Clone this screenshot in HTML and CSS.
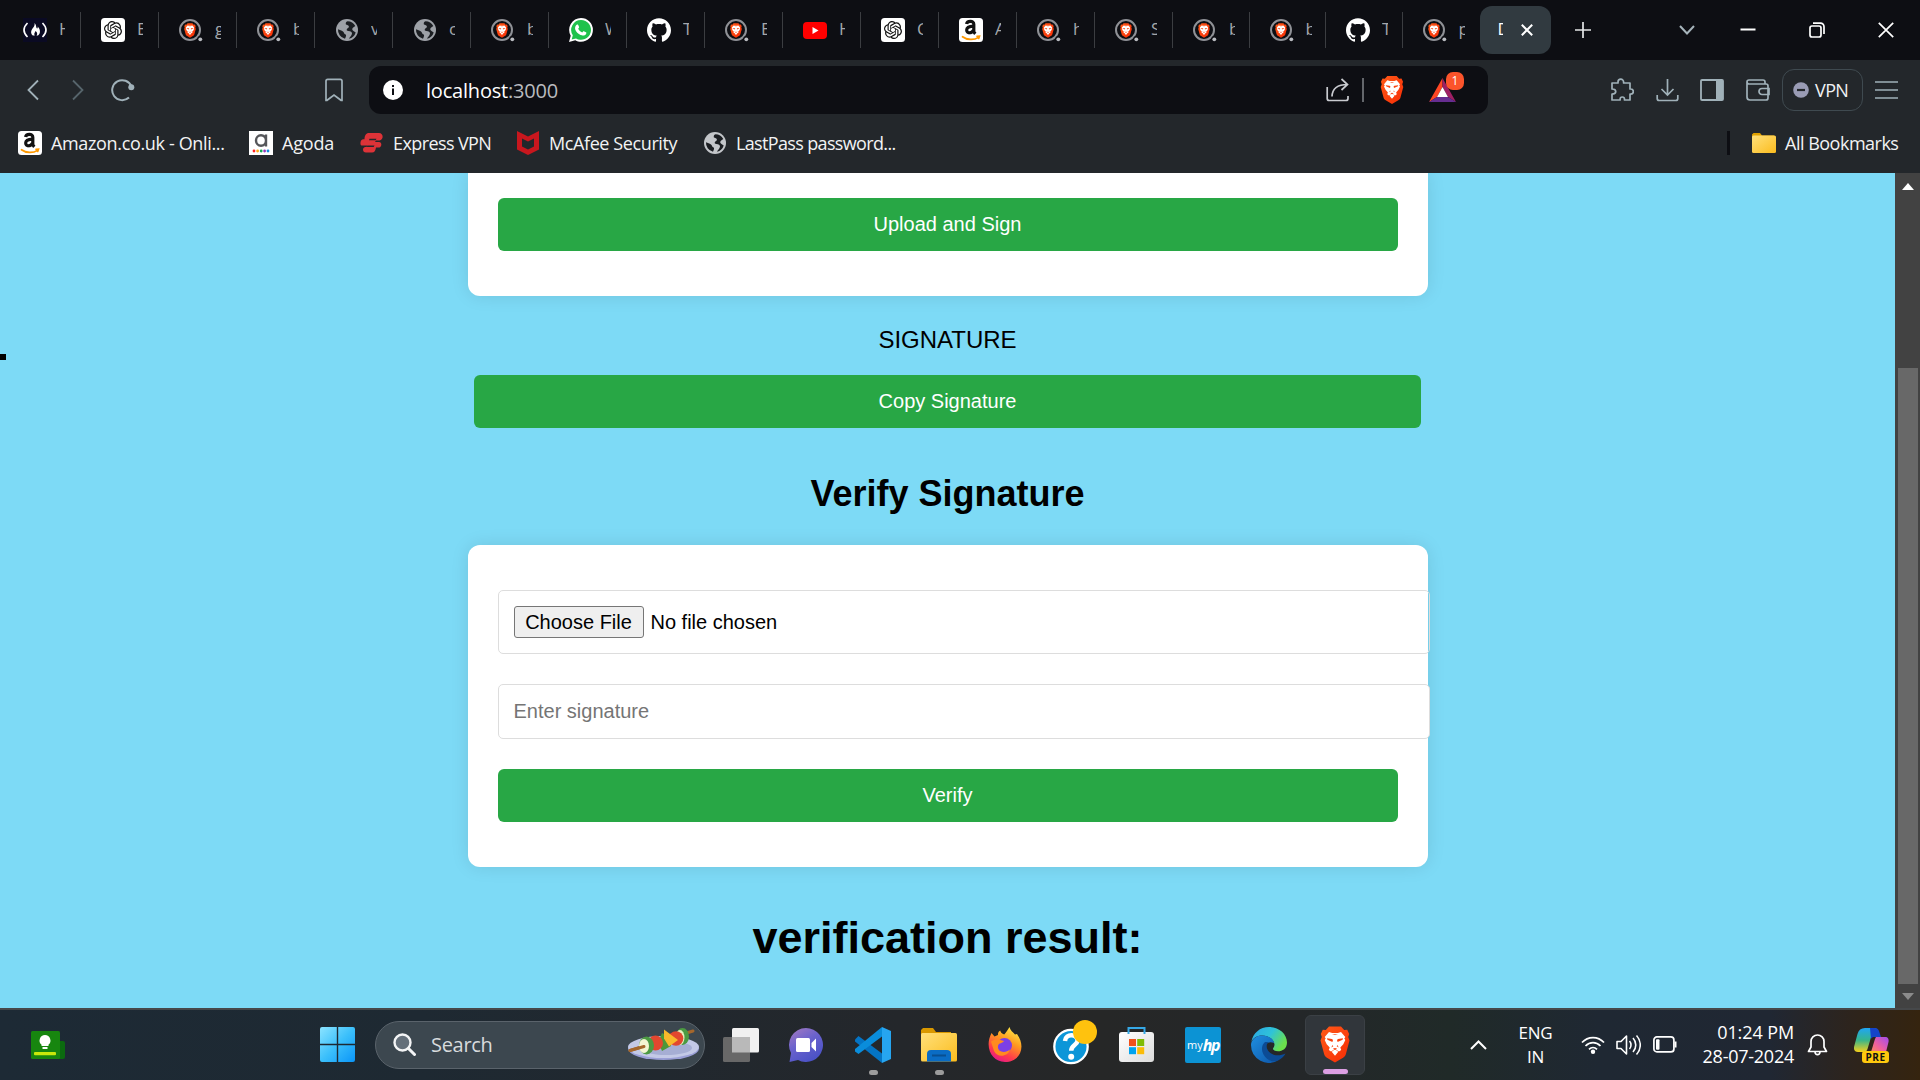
FILE: index.html
```html
<!DOCTYPE html>
<html lang="en">
<head>
<meta charset="utf-8">
<title>Digital Signature</title>
<link rel="stylesheet" href="styles.css">
</head>
<body>
<svg class="defs" width="0" height="0" aria-hidden="true">
  <defs>
    <linearGradient id="gWin" x1="0" y1="0" x2="1" y2="1"><stop offset="0" stop-color="#8ce4ff"/><stop offset=".5" stop-color="#3cc0fb"/><stop offset="1" stop-color="#0a95f8"/></linearGradient>
    <linearGradient id="gLion" x1="0" y1="0" x2="1" y2="1"><stop offset="0" stop-color="#ff5a18"/><stop offset="1" stop-color="#f72c05"/></linearGradient>
    <linearGradient id="gFolder" x1="0" y1="0" x2="1" y2="1"><stop offset="0" stop-color="#ffe07a"/><stop offset="1" stop-color="#fbbc1e"/></linearGradient>
    <linearGradient id="gChat" x1="0" y1="0" x2=".6" y2="1"><stop offset="0" stop-color="#a77bc0"/><stop offset=".5" stop-color="#6a62cd"/><stop offset="1" stop-color="#4b52c6"/></linearGradient>
    <linearGradient id="gFox" x1=".8" y1="0" x2=".3" y2="1"><stop offset="0" stop-color="#fff04a"/><stop offset=".4" stop-color="#ff9a1f"/><stop offset=".75" stop-color="#ff3d4a"/><stop offset="1" stop-color="#e5178a"/></linearGradient>
    <linearGradient id="gEdge1" x1="0" y1="0" x2="1" y2=".5"><stop offset="0" stop-color="#2aa6e8"/><stop offset=".55" stop-color="#2fc3d8"/><stop offset="1" stop-color="#6be04c"/></linearGradient>
    <linearGradient id="gEdge2" x1="0" y1="0" x2="1" y2="1"><stop offset="0" stop-color="#1f8fe0"/><stop offset="1" stop-color="#0d55a8"/></linearGradient>
    <linearGradient id="gCopA" x1="0" y1="0" x2="0" y2="1"><stop offset="0" stop-color="#1fa5f5"/><stop offset=".5" stop-color="#35b58c"/><stop offset="1" stop-color="#f7d01a"/></linearGradient>
    <linearGradient id="gCopB" x1="1" y1="0" x2="0" y2="1"><stop offset="0" stop-color="#a04cf0"/><stop offset=".6" stop-color="#f0609c"/><stop offset="1" stop-color="#fb8a5a"/></linearGradient>
    <linearGradient id="gBox" x1="0" y1="0" x2="1" y2="1"><stop offset="0" stop-color="#ffffff"/><stop offset="1" stop-color="#dcdcdc"/></linearGradient>

    <symbol id="lion" viewBox="0 0 30 36">
      <path fill="url(#gLion)" d="M9 0h12l3.200 3.600 3-.4 2 4.300-1 3 1.300 3.600-3.600 13.400c-.5 1.800-1.500 2.800-2.800 3.800L15 36l-8.100-4.700c-1.300-1-2.300-2-2.800-3.800L.5 14.100l1.300-3.600-1-3 2-4.300 3 .4z"/>
      <path fill="#fff" d="M9 5.500l3.200.9h5.600l3.200-.9 4.300 5-1 1.600 1 1.400-2 4.200-3 3.400.9 2.400-2.200 1.500-3.300-2-.4-.1 3 2.400-3.300 4-3.300-4 3-2.400-.4.100-3.300 2-2.200-1.500.9-2.400-3-3.400-2-4.200 1-1.400-1-1.600z"/>
      <path fill="#f9420f" d="M7 11.800l5 .6 1 1-.6 2-5-2.200zM23 11.800l-5 .6-1 1 .6 2 5-2.200zM12.500 18.500l.8 1.200-2 1.300zM17.500 18.500l-.8 1.200 2 1.300zM12.800 22.200l2.200-.8 2.200.8-2.200 1.300zM12 7.800h6l-3 .8z"/>
    </symbol>
    <symbol id="bravetab" viewBox="0 0 24 24">
      <circle cx="11" cy="12" r="10" fill="#0d0e13" stroke="#8f9196" stroke-width="2"/>
      <circle cx="21.500" cy="21.300" r="3.400" fill="#0d0e13"/><circle cx="21.300" cy="21.300" r="1.900" fill="#b9bbc0"/>
      <svg x="5" y="5" width="12" height="15"><use href="#lion"/></svg>
    </symbol>
    <symbol id="globe" viewBox="0 0 24 24">
      <circle cx="12" cy="12" r="11"/>
      <path class="land" d="M12.500 3.200c-1.600.6-2 2-1.600 3.200 1 .6 3 .5 3 2.200 0 1.600-1.600 1.500-2.100 2.600-.4 1 .3 1.500 1.500 1.700 2.500.3 3.700 1 3.700 2.700-.3 2.400-2 3-3 5.200a9 9 0 0 0 6.700-6.200l-2.200-1.500c-1.300-1-1.800-2.200-.6-3.400l2.400-1.700A9 9 0 0 0 12.500 3.200zM3 11.200c1.700 1 3.500 1.200 5 2.200 1.200.9 1 2.500 2.600 3.200.9.500.4 2-.6 4.200A9 9 0 0 1 3 11.200z"/>
    </symbol>
    <symbol id="openai" viewBox="0 0 24 24">
      <rect width="24" height="24" rx="3.500" fill="#fff"/>
      <svg x="3" y="3" width="18" height="18" viewBox="0 0 24 24"><path fill="#111" d="M22.2819 9.8211a5.9847 5.9847 0 0 0-.5157-4.9108 6.0462 6.0462 0 0 0-6.5098-2.9A6.0651 6.0651 0 0 0 4.9807 4.1818a5.9847 5.9847 0 0 0-3.9977 2.9 6.0462 6.0462 0 0 0 .7427 7.0966 5.98 5.98 0 0 0 .511 4.9107 6.051 6.051 0 0 0 6.5146 2.9001A5.9847 5.9847 0 0 0 13.2599 24a6.0557 6.0557 0 0 0 5.7718-4.2058 5.9894 5.9894 0 0 0 3.9977-2.9001 6.0557 6.0557 0 0 0-.7475-7.0729zm-9.022 12.6081a4.4755 4.4755 0 0 1-2.8764-1.0408l.1419-.0804 4.7783-2.7582a.7948.7948 0 0 0 .3927-.6813v-6.7369l2.02 1.1686a.071.071 0 0 1 .038.052v5.5826a4.504 4.504 0 0 1-4.4945 4.4944zm-9.6607-4.1254a4.4708 4.4708 0 0 1-.5346-3.0137l.142.0852 4.783 2.7582a.7712.7712 0 0 0 .7806 0l5.8428-3.3685v2.3324a.0804.0804 0 0 1-.0332.0615L9.74 19.9502a4.4992 4.4992 0 0 1-6.1408-1.6464zM2.3408 7.8956a4.485 4.485 0 0 1 2.3655-1.9728V11.6a.7664.7664 0 0 0 .3879.6765l5.8144 3.3543-2.0201 1.1685a.0757.0757 0 0 1-.071 0l-4.8303-2.7865A4.504 4.504 0 0 1 2.3408 7.872zm16.5963 3.8558L13.1038 8.364 15.1192 7.2a.0757.0757 0 0 1 .071 0l4.8303 2.7913a4.4944 4.4944 0 0 1-.6765 8.1042v-5.6772a.79.79 0 0 0-.407-.667zm2.0107-3.0231l-.142-.0852-4.7735-2.7818a.7759.7759 0 0 0-.7854 0L9.409 9.2297V6.8974a.0662.0662 0 0 1 .0284-.0615l4.8303-2.7866a4.4992 4.4992 0 0 1 6.6802 4.66zM8.3065 12.863l-2.02-1.1638a.0804.0804 0 0 1-.038-.0567V6.0742a4.4992 4.4992 0 0 1 7.3757-3.4537l-.142.0805L8.704 5.459a.7948.7948 0 0 0-.3927.6813zm1.0976-2.3654l2.602-1.4998 2.6069 1.4998v2.9994l-2.5974 1.4997-2.6067-1.4997Z"/></svg>
    </symbol>
    <symbol id="github" viewBox="0 0 24 24"><path fill="#fff" d="M12 .297c-6.63 0-12 5.373-12 12 0 5.303 3.438 9.8 8.205 11.385.6.113.82-.258.82-.577 0-.285-.01-1.04-.015-2.04-3.338.724-4.042-1.61-4.042-1.61C4.422 18.07 3.633 17.7 3.633 17.7c-1.087-.744.084-.729.084-.729 1.205.084 1.838 1.236 1.838 1.236 1.07 1.835 2.809 1.305 3.495.998.108-.776.417-1.305.76-1.605-2.665-.3-5.466-1.332-5.466-5.93 0-1.31.465-2.38 1.235-3.22-.135-.303-.54-1.523.105-3.176 0 0 1.005-.322 3.3 1.23.96-.267 1.98-.399 3-.405 1.02.006 2.04.138 3 .405 2.28-1.552 3.285-1.23 3.285-1.23.645 1.653.24 2.873.12 3.176.765.84 1.23 1.91 1.23 3.22 0 4.61-2.805 5.625-5.475 5.92.42.36.81 1.096.81 2.22 0 1.606-.015 2.896-.015 3.286 0 .315.21.69.825.57C20.565 22.092 24 17.592 24 12.297c0-6.627-5.373-12-12-12"/></symbol>
    <symbol id="amazon" viewBox="0 0 24 24">
      <rect width="24" height="24" rx="3.500" fill="#fff"/>
      <path fill="none" stroke="#111" stroke-width="3.200" d="M7.600 6c.5-3 7.200-4 7.200.3v7c0 1.200.7 1.800 1.500 2.600M14.500 8.200c-4.500.1-6.800 1-6.800 3.900 0 3.600 4.800 3.600 6.900-.2"/>
      <path fill="none" stroke="#f90" stroke-width="1.700" stroke-linecap="round" d="M3.500 18.700c4.500 3.400 11.500 3.700 16 .7M18 18.300l2.500-.1-.8 2.300"/>
    </symbol>
  </defs>
</svg>

<div class="screen">
  <header class="browser">
    <div class="tabs">
      <div class="tab"><svg class="fav" viewBox="0 0 24 24"><rect width="24" height="24" fill="#0a0a23"/><path fill="none" stroke="#fff" stroke-width="1.600" d="M4.500 5C0 9.500 0 14.500 4.500 19M19.500 5c4.500 4.500 4.500 9.500 0 14"/><path fill="#fff" d="M11.500 5c2.500 2.500 1 4 2.600 5.500.8-.4.700-1.200.5-2 2.600 2.500 3.500 6.500.4 9h-1.500c1.200-1.200.8-3.400-1-4.600-.6 1.700-2 2.800-.7 4.600h-2c-3.200-2.700-1-6.300.7-8.200 1-1.200 1.300-2.600 1-4.300z"/></svg><span class="tab-title">H</span></div>
      <div class="tab"><svg class="fav"><use href="#openai"/></svg><span class="tab-title">E</span></div>
      <div class="tab"><svg class="fav"><use href="#bravetab"/></svg><span class="tab-title">g</span></div>
      <div class="tab"><svg class="fav"><use href="#bravetab"/></svg><span class="tab-title">b</span></div>
      <div class="tab"><svg class="fav globe"><use href="#globe"/></svg><span class="tab-title">v</span></div>
      <div class="tab"><svg class="fav globe"><use href="#globe"/></svg><span class="tab-title">c</span></div>
      <div class="tab"><svg class="fav"><use href="#bravetab"/></svg><span class="tab-title">b</span></div>
      <div class="tab"><svg class="fav" viewBox="0 0 24 24"><path fill="#fff" d="M12 0a11.900 11.900 0 0 1 0 23.800c-2 0-4-.5-5.700-1.500L0 24l1.700-6.200A11.900 11.900 0 0 1 12 0z"/><path fill="#1fc24c" d="M12 2a9.900 9.900 0 1 1-5 18.400L2.700 21.400 3.800 17.300A9.900 9.900 0 0 1 12 2z"/><path fill="#fff" d="M8.200 6.500c.5 0 .8 0 1 .6l.9 2c.1.400-.1.800-.9 1.700.9 1.700 2.200 2.800 4 3.600.9-1 1.100-1.400 1.600-1.200l2.200 1.100c.5.200.4.700.2 1.400-.5 1.500-2.600 2.200-4.400 1.600-3.500-1-6.300-4-6.700-6.600-.2-1.700.9-4.200 2.100-4.200z"/></svg><span class="tab-title">W</span></div>
      <div class="tab"><svg class="fav"><use href="#github"/></svg><span class="tab-title">T</span></div>
      <div class="tab"><svg class="fav"><use href="#bravetab"/></svg><span class="tab-title">E</span></div>
      <div class="tab"><svg class="fav" viewBox="0 0 24 24"><rect y="4" width="24" height="17" rx="4" fill="#f00"/><path fill="#fff" d="M9.500 9v7l6-3.500z"/></svg><span class="tab-title">H</span></div>
      <div class="tab"><svg class="fav"><use href="#openai"/></svg><span class="tab-title">C</span></div>
      <div class="tab"><svg class="fav"><use href="#amazon"/></svg><span class="tab-title">A</span></div>
      <div class="tab"><svg class="fav"><use href="#bravetab"/></svg><span class="tab-title">h</span></div>
      <div class="tab"><svg class="fav"><use href="#bravetab"/></svg><span class="tab-title">S</span></div>
      <div class="tab slim"><svg class="fav"><use href="#bravetab"/></svg><span class="tab-title">b</span></div>
      <div class="tab slim"><svg class="fav"><use href="#bravetab"/></svg><span class="tab-title">b</span></div>
      <div class="tab slim"><svg class="fav"><use href="#github"/></svg><span class="tab-title">T</span></div>
      <div class="tab last"><svg class="fav"><use href="#bravetab"/></svg><span class="tab-title">p</span></div>
      <div class="tab-active"><span class="tab-title">D</span><svg width="12" height="12" viewBox="0 0 12 12"><path d="M.8.800l10.400 10.400M11.200.8L.8 11.200" stroke="#fff" stroke-width="2"/></svg></div>
      <svg class="new-tab" width="16" height="16" viewBox="0 0 16 16"><path d="M8 0v16M0 8h16" stroke="#e4e6e8" stroke-width="1.700"/></svg>
      <div class="window-controls">
        <svg width="16" height="16" viewBox="0 0 16 16"><path d="M1 4l7 7.500L15 4" fill="none" stroke="#a6b4bb" stroke-width="2"/></svg>
        <svg width="16" height="16" viewBox="0 0 16 16"><path d="M.5 7.500h15" stroke="#fff" stroke-width="2"/></svg>
        <svg width="16" height="16" viewBox="0 0 16 16"><rect x="1" y="4" width="11" height="11" rx="2" fill="none" stroke="#fff" stroke-width="1.700"/><path d="M4 1.200h7.500a3.500 3.500 0 0 1 3.500 3.500V12" fill="none" stroke="#fff" stroke-width="1.700"/></svg>
        <svg width="16" height="16" viewBox="0 0 16 16"><path d="M.8.800l14.400 14.400M15.200.8L.8 15.200" stroke="#fff" stroke-width="1.700"/></svg>
      </div>
    </div>

    <div class="toolbar">
      <svg class="back" width="12" height="22" viewBox="0 0 12 22"><path d="M11 1.500L1.500 11l9.500 9.500" fill="none" stroke="#a0b1b9" stroke-width="1.800"/></svg>
      <svg class="forward" width="12" height="22" viewBox="0 0 12 22"><path d="M1 1.500l9.500 9.500L1 20.500" fill="none" stroke="#57656c" stroke-width="1.800"/></svg>
      <svg class="reload" width="24" height="24" viewBox="0 0 24 24"><path d="M20.500 8.500A10 10 0 1 0 18 19.500" fill="none" stroke="#a0b1b9" stroke-width="2"/><circle cx="20.300" cy="9.300" r="3" fill="#a0b1b9"/></svg>
      <svg class="save" width="18" height="24" viewBox="0 0 18 24"><path d="M1 3a1.700 1.700 0 0 1 1.700-1.700h12.600A1.700 1.700 0 0 1 17 3v19.300h-1L9 17l-7 5.300H1z" fill="none" stroke="#a0b1b9" stroke-width="1.700"/></svg>
      <div class="address">
        <svg width="20" height="20" viewBox="0 0 20 20"><circle cx="10" cy="10" r="10" fill="#fff"/><path d="M10 8.500V15M10 5v2" stroke="#0d0e13" stroke-width="2"/></svg>
        <span class="url">localhost<span class="port">:3000</span></span>
        <svg class="share" width="24" height="24" viewBox="0 0 24 24"><path d="M1.200 9v11.500a2 2 0 0 0 2 2H20a2 2 0 0 0 2-2V18M6 18.500C6.300 11 11 6.500 21.500 6.500M15.500 1l6 5.500-6 5.500" fill="none" stroke="#c9cbd0" stroke-width="1.700"/></svg>
        <span class="address-divider"></span>
        <svg class="shield" width="24" height="28"><use href="#lion"/></svg>
        <div class="rewards"><svg width="27" height="24" viewBox="0 0 27 24"><path fill="#ff4724" d="M13.500 0v9L8 19l-8 5z"/><path fill="#9e1f63" d="M13.500 0v9L19 19l8 5z"/><path fill="#662d91" d="M0 24l8-5h11l8 5z"/><path fill="#fff" d="M13.500 9L19 19H8z"/></svg><span class="badge">1</span></div>
      </div>
      <svg class="ext" width="24" height="24" viewBox="0 0 24 24"><path d="M2 5h6V4a2.800 2.800 0 0 1 5.600 0v1H20v6h.7a2.600 2.600 0 0 1 0 5.200H20V22h-5.500v-.8a2.200 2.200 0 0 0-4.400 0v.8H2v-6c5 0 5-5 0-5z" fill="none" stroke="#a0b1b9" stroke-width="1.700" stroke-linejoin="round"/></svg>
      <svg class="down" width="23" height="24" viewBox="0 0 23 24"><path d="M11.500 1v16M5.500 11l6 6 6-6M1.200 17v3.500a2 2 0 0 0 2 2h16.600a2 2 0 0 0 2-2V17" fill="none" stroke="#a0b1b9" stroke-width="1.700"/></svg>
      <svg class="side" width="24" height="22" viewBox="0 0 24 22"><rect x="1" y="1" width="22" height="20" rx="1" fill="none" stroke="#a0b1b9" stroke-width="1.800"/><path d="M16 1h7v20h-7z" fill="#a0b1b9"/></svg>
      <svg class="wallet" width="24" height="22" viewBox="0 0 24 22"><path d="M1 3v15a3 3 0 0 0 3 3h16a2 2 0 0 0 2-2V7a2 2 0 0 0-2-2H3a2 2 0 0 1 0-4h14a2 2 0 0 1 2 2v2M23 9.500h-7a2.500 2.500 0 0 0 0 6h7z" fill="none" stroke="#a0b1b9" stroke-width="1.700"/></svg>
      <div class="vpn"><svg width="16" height="16" viewBox="0 0 16 16"><circle cx="8" cy="8" r="7.800" fill="#9a9cb5"/><path d="M4 8h8" stroke="#23272b" stroke-width="2.200"/></svg><span>VPN</span></div>
      <svg class="menu" width="23" height="18" viewBox="0 0 23 18"><path d="M0 1h23M0 9h23M0 17h23" stroke="#a0b1b9" stroke-width="1.700"/></svg>
    </div>

    <div class="bookmarks">
      <svg class="fav"><use href="#amazon"/></svg><span class="bm bm-amazon">Amazon.co.uk - Onli...</span>
      <svg class="fav" viewBox="0 0 24 24"><rect width="24" height="24" fill="#fff"/><path fill="none" stroke="#55565a" stroke-width="2.400" d="M17 3.500V15.500M17 9.500a5 5.300 0 1 0-10 0 5 5.300 0 1 0 10 0z"/><circle cx="5" cy="20" r="1.400" fill="#f22"/><circle cx="8.600" cy="20" r="1.400" fill="#fa1"/><circle cx="12.200" cy="20" r="1.400" fill="#1a5"/><circle cx="15.600" cy="20" r="1.400" fill="#93b"/><circle cx="19" cy="20" r="1.400" fill="#18d"/></svg><span class="bm bm-agoda">Agoda</span>
      <svg class="fav" viewBox="0 0 24 24"><path fill="#dd3338" d="M9 2h10c4.500 0 5 6.500.5 7.500H16l-1 1.500h4c3 0 3 4.500.5 5.500H16c-.5 3-1.500 5-4 5H6C2.500 21.500 2 17 5 16h1.500l1-1.500H1.500c-2-1-1-6 1.500-6.200h1.500C4.500 4.500 6 2 9 2z"/><path fill="#23272b" d="M9.500 7.800h7l-.8 1.500H9zM7.500 14.500h7l-.8 1.600h-7z"/></svg><span class="bm bm-vpn">Express VPN</span>
      <svg class="fav mcafee" viewBox="0 0 22 24"><path fill="#c8171e" d="M0 0l11 5.500L22 0v18.500L11 24 0 18.500zM5 7.500v8l6 3 6-3v-8l-6 3z" fill-rule="evenodd"/></svg><span class="bm bm-mcafee">McAfee Security</span>
      <svg class="fav globe light"><use href="#globe"/></svg><span class="bm bm-lastpass">LastPass password...</span>
      <span class="bm-divider"></span>
      <svg class="folder" width="24" height="20" viewBox="0 0 24 20"><path fill="#dfa000" d="M1.500 0h6.500l2 2.500H22V6H0V1.500z"/><rect y="2.500" width="24" height="17.500" rx="1.500" fill="url(#gFolder)"/></svg><span class="bm bm-all">All Bookmarks</span>
    </div>
  </header>

  <div class="viewport">
    <main class="page">
      <span class="caret"></span>
      <section class="card card-sign"><button class="btn">Upload and Sign</button></section>
      <div class="signature-label">SIGNATURE</div>
      <button class="btn btn-copy">Copy Signature</button>
      <h2 class="verify-title">Verify Signature</h2>
      <section class="card card-verify">
        <label class="field file-field"><span class="file-button">Choose File</span><span class="file-name">No file chosen</span></label>
        <input class="field text-field" type="text" placeholder="Enter signature">
        <button class="btn">Verify</button>
      </section>
      <h1 class="result-title">verification result:</h1>
    </main>
    <div class="scrollbar">
      <svg width="12" height="7" viewBox="0 0 12 7"><path d="M6 0l6 7H0z" fill="#fff"/></svg>
      <div class="thumb"></div>
      <svg class="arrow-down" width="12" height="7" viewBox="0 0 12 7"><path d="M0 0h12L6 7z" fill="#8b8b8b"/></svg>
    </div>
  </div>

  <footer class="taskbar">
    <svg class="widgets" width="34" height="28" viewBox="0 0 34 28"><rect x="24" y="10" width="10" height="18" rx="2" fill="#0b6a0f"/><rect width="29" height="28" rx="1.500" fill="#17860f"/><path fill="#fff" d="M14 4a5.500 5.500 0 0 1 3.500 9.700V15h-7v-1.300A5.500 5.500 0 0 1 14 4zM11.500 16h5v2h-5z"/><rect x="3" y="21" width="22" height="3.200" rx="1" fill="#c9e80b"/></svg>
    <svg class="start" width="35" height="35" viewBox="0 0 35 35"><path fill="url(#gWin)" d="M2 0h14.800v16.800H0V2a2 2 0 0 1 2-2zM18.200 0H33a2 2 0 0 1 2 2v14.800H18.200zM0 18.200h16.800V35H2a2 2 0 0 1-2-2zM18.200 18.200H35V33a2 2 0 0 1-2 2H18.200z"/></svg>
    <div class="search">
      <svg width="23" height="23" viewBox="0 0 23 23"><circle cx="9.500" cy="9.500" r="8" fill="#65707a" stroke="#f4f5f6" stroke-width="2.400"/><path d="M15.500 15.500l6 6" stroke="#f4f5f6" stroke-width="3" stroke-linecap="round"/></svg>
      <span class="search-text">Search</span>
      <svg class="kebab" width="72" height="34" viewBox="0 0 72 34"><ellipse cx="35.500" cy="20.500" rx="35.500" ry="11.500" fill="#9a9fd6"/><ellipse cx="35.500" cy="19" rx="35.500" ry="11" fill="#c3c9e6"/><ellipse cx="38" cy="20" rx="26" ry="7" fill="#a6aed4"/><path d="M2 22.500L65 3" stroke="#a5672c" stroke-width="3" stroke-linecap="round"/><ellipse cx="54.500" cy="8.500" rx="6.500" ry="8.500" fill="#4c9a42"/><ellipse cx="52" cy="9.500" rx="4.500" ry="7.500" fill="#e6f0c0"/><circle cx="48" cy="10.500" r="7.300" fill="#e2472f"/><path d="M34 5l8 4 1 9-9 5-4-9z" fill="#4d9638"/><path d="M36 1.500l14 10.500-9 6.500-5-8z" fill="#f9b82b"/><circle cx="27.500" cy="15" r="7.500" fill="#e2472f"/><ellipse cx="18.500" cy="17.500" rx="7.500" ry="9" fill="#4c9a42"/><ellipse cx="16" cy="18" rx="5" ry="7" fill="#f3f5d3"/><path d="M2 22.500l14-4" stroke="#a5672c" stroke-width="3" stroke-linecap="round"/></svg>
    </div>
    <svg class="task taskview" width="36" height="34" viewBox="0 0 36 34"><rect x="9" width="27" height="24.500" rx="1.500" fill="#f1f1f1"/><rect y="9" width="27" height="25" rx="1.500" fill="#686868"/><path d="M9 9h18v15.500H9z" fill="#b9b9b9"/></svg>
    <svg class="task chat" width="34" height="34" viewBox="0 0 34 34"><path fill="url(#gChat)" d="M17 0a17 17 0 1 1-8 32L.5 34 2 25A17 17 0 0 1 17 0z"/><rect x="7" y="10" width="14" height="14" rx="1.500" fill="#fff"/><path fill="#fff" d="M22.500 15l4.500-4.500V23.500L22.500 19z"/></svg>
    <div class="task vscode running"><svg width="36" height="36" viewBox="0 0 36 36"><path fill="#0474c4" d="M3.500 9L0 12.500v2l27 21.500V26.500z"/><path fill="#0a8ddb" d="M27 0L0 22v2.500L3.500 27 27 9.500z"/><path fill="#26a5f0" d="M27 0l9 4v28l-9 4z"/></svg><i></i></div>
    <div class="task explorer running"><svg width="36" height="34" viewBox="0 0 36 34"><path fill="#d99800" d="M2 0h10l3 4h15v8H0V2z"/><rect y="5" width="36" height="28.500" rx="1.500" fill="url(#gFolder)"/><path fill="#0a6cc4" d="M10 22h16a4 4 0 0 1 4 4v7.500H6V26a4 4 0 0 1 4-4z"/><path d="M11 27.500h14" stroke="#084f91" stroke-width="2"/></svg><i></i></div>
    <svg class="task firefox" width="34" height="35" viewBox="0 0 34 35"><path fill="url(#gFox)" d="M3.500 6l3 3.500L10 8c-.3-2 .6-3.800 2.200-4.600.4 2 1.800 3.300 4 4C18 5.800 19.500 3 21.500 0c.7 3.600 3.500 5 5.500 7.500l2-.5C38.500 20 32 35 17 35 4 35-4 20.500 3.500 6z"/><circle cx="16.500" cy="18.500" r="7.500" fill="#7c3fe6"/><path fill="#ff8b1f" d="M3 14.500c4-3 8-2.500 13-.5-1 2.500-5.500 1.500-6 5C9 25 17 27 22 22.500 20 30 9 31 6 24z"/></svg>
    <svg class="task help" width="44" height="46" viewBox="0 0 44 46"><circle cx="18" cy="26.500" r="16.700" fill="#0c96d8" stroke="#fff" stroke-width="2.300"/><path d="M12 21c.5-8 13-7 12.500-.3-.2 4.600-6.300 4.200-6.300 10" fill="none" stroke="#fff" stroke-width="4.500"/><circle cx="18.200" cy="36.800" r="3" fill="#fff"/><circle cx="32" cy="12" r="12" fill="#ffc20e"/></svg>
    <svg class="task store" width="35" height="35" viewBox="0 0 35 35"><rect y="5" width="35" height="30" rx="3" fill="url(#gBox)"/><path d="M9.500 7V1h16v6" fill="none" stroke="#35a8e6" stroke-width="2"/><path fill="#f1511b" d="M10 12h7v7h-7z"/><path fill="#80bc06" d="M18.200 12h7v7h-7z"/><path fill="#00a3ee" d="M10 20.200h7v7h-7z"/><path fill="#fbbc09" d="M18.200 20.200h7v7h-7z"/></svg>
    <div class="task myhp"><span>my</span><b>hp</b></div>
    <svg class="task edge" width="36" height="36" viewBox="0 0 36 36"><path fill="url(#gEdge1)" d="M.3 15C2 6 9 0 18 0c10 0 18 7 18 15.500 0 6-4.500 8.800-9 8.800-3 0-5-1-5-2.500 0-1 1.500-1.800 1.500-4.300C23 12 17 8.500 11 8.500 6 8.500 2 11 .3 15z"/><path fill="url(#gEdge2)" d="M.2 16C2 11 6 8.500 11 8.500c6 0 11 2.800 12.200 7.500-8-3-12 4-9 10 2.500 5 8 8.500 13.500 7A18 18 0 0 1 0 18z"/><path fill="#0c4b95" d="M14 15c-3.500 3-4 8-1.500 12.500 2.500 4.500 8 8 13.500 6.500 4-1.500 7-4.500 8.500-7.500-7 3.500-16 2-18.500-5-.7-2.500-.2-5 1.500-6.500z"/></svg>
    <div class="brave-tile"><svg width="30" height="37"><use href="#lion"/></svg><i></i></div>
    <div class="tray">
      <svg class="up" width="17" height="10" viewBox="0 0 17 10"><path d="M1 9l7.500-7.500L16 9" fill="none" stroke="#fff" stroke-width="2"/></svg>
      <div class="lang">ENG<br>IN</div>
      <svg class="wifi" width="24" height="18" viewBox="0 0 24 18"><path d="M1 6.500c6-6.600 16-6.600 22 0M4.500 10c4.300-4.600 10.700-4.600 15 0M8 13.300c2.300-2.400 5.700-2.400 8 0" fill="none" stroke="#fff" stroke-width="1.700"/><circle cx="12" cy="15.700" r="2.200" fill="#fff"/></svg>
      <svg class="volume" width="25" height="22" viewBox="0 0 25 22"><path d="M1 7.500h4L10.500 2v18L5 14.500H1zM13.500 7c2 2.200 2 5.800 0 8M17 4c3.700 4 3.700 10 0 14M20.500 1.500c5 5.500 5 13.500 0 19" fill="none" stroke="#fff" stroke-width="1.600" stroke-linejoin="round"/></svg>
      <svg class="battery" width="24" height="17" viewBox="0 0 24 17"><rect x=".9" y=".9" width="20" height="15" rx="3" fill="none" stroke="#fff" stroke-width="1.700"/><rect x="3" y="3.200" width="3.500" height="10.500" rx="1" fill="#fff"/><path d="M22.500 5.500v6" stroke="#fff" stroke-width="2"/></svg>
      <div class="clock">01:24 PM<br><span class="date">28-07-2024</span></div>
      <svg class="bell" width="21" height="23" viewBox="0 0 21 23"><path d="M1.500 18.500L4 14V8.500a6.500 6.500 0 0 1 13 0V14l2.500 4.500zM8 19c.3 3.500 4.700 3.500 5 0" fill="none" stroke="#fff" stroke-width="1.700" stroke-linejoin="round"/></svg>
      <div class="copilot"><svg width="35" height="34" viewBox="0 0 35 34"><path fill="url(#gCopA)" d="M11 0h9c2.500 0 3.500 1.500 4 3l1.500 5h-6c-2 0-2.500 1-3 3l-3 10c-.7 2-1.500 3-4 3H4c-3 0-4.500-2-4-5L3.500 6C4.500 2 7 0 11 0z"/><path fill="#1444c8" d="M16 0h5c2.500 0 3.500 1.500 4 3l2 6h-7c-2 0-2.500 1-3 2z"/><path fill="url(#gCopB)" d="M22 9h9c3 0 4 2 3.500 5L32 24H17l4-13z"/></svg><span>PRE</span></div>
    </div>
  </footer>
</div>
</body>
</html>
```
FILE: styles.css
```css
* { box-sizing: border-box; }
body { margin: 0; background: #0d0e13; font-family: "Open Sans", "Noto Sans", sans-serif; }
svg { display: block; flex: none; }
.defs { position: absolute; }
.screen { width: 1920px; height: 1080px; display: flex; flex-direction: column; overflow: hidden; }

/* tab strip */
.browser { flex: none; height: 173px; background: #23272b; }
.tabs { height: 60px; background: #0d0e13; display: flex; align-items: center; padding-left: 3px; }
.tab { flex: none; width: 78px; height: 36px; display: flex; align-items: center; gap: 12px; padding-left: 20px; border-right: 1px solid #3b3d41; }
.tab.slim { width: 76.500px; }
.tab.last { width: 77px; border-right-color: transparent; }
.fav { width: 24px; height: 24px; }
.tab-title { width: 6px; overflow: hidden; font-size: 17px; line-height: 24px; padding-bottom: 2px; color: #a4a7ab; white-space: nowrap; }
.globe { fill: #9da1a7; }
.globe.light { fill: #c3c6ca; }
.land { fill: #1b1e22; }
.tab-active { flex: none; width: 71px; height: 48px; border-radius: 12px; background: #313a40; display: flex; align-items: center; padding-left: 18px; gap: 18px; }
.tab-active .tab-title { width: 5px; color: #fff; }
.new-tab { margin-left: 24px; }
.window-controls { margin-left: auto; margin-right: 26px; display: flex; gap: 53px; }
.window-controls svg:first-child { margin-right: -8px; }

/* toolbar */
.toolbar { height: 60px; display: flex; align-items: center; }
.back { margin-left: 27px; }
.forward { margin-left: 33px; }
.reload { margin-left: 27px; }
.save { margin-left: 190px; }
.address { margin-left: 26px; width: 1119px; height: 48px; border-radius: 12px; background: #0d0e13; display: flex; align-items: center; padding-left: 14px; }
.url { margin-left: 23px; font-size: 20px; letter-spacing: -.2px; color: #fff; }
.port { color: #b9bbbf; }
.share { margin-left: auto; }
.address-divider { width: 2px; height: 24px; background: #63666b; margin: 0 16px 0 12px; }
.rewards { position: relative; margin: 0 32px 0 25px; }
.badge { position: absolute; left: 17px; top: -6px; width: 18px; height: 18px; border-radius: 7px; background: #fb542b; color: #fff; font-size: 12px; line-height: 18px; text-align: center; }
.ext { margin-left: 122px; }
.down { margin-left: 22px; }
.side { margin-left: 21px; }
.wallet { margin-left: 22px; }
.vpn { margin-left: 12px; width: 81px; height: 42px; border: 1.500px solid #3f4a50; border-radius: 12px; display: flex; align-items: center; gap: 6px; padding-left: 10px; font-size: 18px; letter-spacing: -.6px; color: #f0f2f3; }
.vpn span { padding-bottom: 1px; }
.menu { margin-left: 12px; }

/* bookmarks */
.bookmarks { height: 46px; display: flex; align-items: center; padding-left: 18px; }
.bm { font-size: 18px; color: #f2f3f4; white-space: nowrap; margin-left: 9px; flex: none; letter-spacing: -.5px; padding-bottom: 1px; }
.bm-amazon { width: 198px; letter-spacing: -.35px; }
.bm-agoda { width: 78px; letter-spacing: -.2px; }
.bm-vpn { width: 124px; letter-spacing: -.6px; }
.bm-mcafee { width: 154px; margin-left: 10px; letter-spacing: -.4px; }
.bm-lastpass { width: 200px; letter-spacing: -.65px; }
.mcafee { width: 22px; }
.bm-divider { margin-left: auto; width: 3px; height: 24px; background: #0d0e13; }
.folder { margin-left: 22px; }
.bm-all { width: 135px; }

/* web page */
.viewport { flex: none; height: 835px; display: flex; }
.page { position: relative; width: 1895px; background: #7ddaf6; display: flex; flex-direction: column; align-items: center; overflow: hidden; font-family: "Liberation Sans", Arial, sans-serif; color: #000; }
.caret { position: absolute; left: 0; top: 181px; width: 6px; height: 6px; background: #000; }
.card { flex: none; width: 960px; background: #fff; border-radius: 12px; padding: 0 30px; box-shadow: 0 0 18px rgba(0, 0, 0, .1); display: flex; flex-direction: column; }
.card-sign { height: 123px; padding-top: 25px; border-radius: 0 0 12px 12px; }
.btn { flex: none; width: 100%; height: 53px; border: 0; border-radius: 6px; background: #28a745; color: #fff; font: 20px "Liberation Sans", Arial, sans-serif; padding: 0; }
.signature-label { flex: none; height: 79px; line-height: 88px; font-size: 24px; }
.btn-copy { width: 947px; }
.verify-title { flex: none; margin: 0; height: 117px; line-height: 131px; font-size: 36px; }
.card-verify { height: 322px; padding-top: 45px; }
.field { flex: none; width: 932px; border: 1px solid #ddd; border-radius: 5px; font: 20px "Liberation Sans", Arial, sans-serif; }
.file-field { height: 64px; padding-left: 15px; display: flex; align-items: center; gap: 7px; margin-bottom: 30px; }
.file-button { width: 130px; height: 32px; border: 1px solid #767676; border-radius: 3px; background: #efefef; text-align: center; line-height: 30px; }
.text-field { height: 55px; padding: 0 15px; margin-bottom: 30px; background: #fff; }
.text-field::placeholder { color: #757575; }
.result-title { flex: none; margin: 0; line-height: 142px; font-size: 45px; }
.scrollbar { width: 25px; background: #424242; display: flex; flex-direction: column; align-items: center; padding-top: 10px; }
.thumb { width: 20px; height: 616px; margin-top: 178px; background: #686868; }
.arrow-down { margin-top: 9px; }

/* taskbar */
.taskbar { flex: none; height: 72px; border-top: 2px solid #46484a; padding-bottom: 1px; background: linear-gradient(90deg, #1d2a35 0, #1e2932 420px, #24272b 900px, #262727 1100px, #242729 1300px, #202a28 1450px, #1f2833 1600px, #202733 1770px, #2d241d 1850px, #35240f 1920px); display: flex; align-items: center; }
.widgets { margin-left: 31px; }
.start { margin-left: 255px; }
.search { flex: none; margin-left: 20px; width: 330px; height: 48px; border: 1.500px solid #5a636b; border-radius: 24px; background: #3c474f; display: flex; align-items: center; padding-left: 17px; }
.search-text { margin-left: 15px; font-size: 20px; letter-spacing: -.3px; padding-bottom: 1px; color: #d8dbdd; }
.kebab { margin-left: auto; margin-right: 4px; }
.task { flex: none; }
.taskview { margin-left: 18px; }
.chat { margin-left: 30px; }
.vscode { margin-left: 32px; }
.explorer { margin-left: 30px; }
.firefox { margin-left: 31px; }
.help { margin-left: 31px; margin-top: -4px; }
.store { margin-left: 22px; }
.myhp { margin-left: 31px; width: 36px; height: 36px; border-radius: 2px; background: #0c93d4; color: #fff; display: flex; align-items: center; justify-content: center; font-size: 11px; line-height: 1; }
.myhp b { font-size: 16px; font-style: italic; letter-spacing: -1.500px; }
.edge { margin-left: 30px; }
.running { position: relative; }
.running i { position: absolute; left: 14px; bottom: -12px; width: 9px; height: 5px; border-radius: 3px; background: #9c9c9c; }
.explorer i { bottom: -13px; }
.brave-tile { flex: none; position: relative; margin-left: 18px; width: 60px; height: 60px; border-radius: 6px; background: #31363b; border: 1px solid #3b4045; display: flex; align-items: center; justify-content: center; }
.brave-tile i { position: absolute; left: 17px; bottom: 0; width: 25px; height: 5px; border-radius: 3px; background: #dc9fe3; }
.tray { flex: none; display: flex; align-items: center; margin-left: 105px; color: #fff; font-size: 17px; line-height: 24px; }
.lang { margin-left: 27px; width: 43px; text-align: center; letter-spacing: -.2px; }
.wifi { margin-left: 24px; }
.volume { margin-left: 11px; }
.battery { margin-left: 12px; }
.clock { margin-left: 17px; width: 100px; text-align: right; font-size: 18px; letter-spacing: -.1px; white-space: nowrap; padding-bottom: 2px; }
.clock .date { letter-spacing: -.25px; }
.bell { margin-left: 13px; }
.copilot { position: relative; margin-left: 26px; }
.copilot span { position: absolute; left: 8px; top: 23px; width: 27px; height: 12px; border-radius: 3px; background: #ffc90e; color: #111; font-size: 10px; font-weight: 700; line-height: 12px; text-align: center; letter-spacing: .5px; }
```
